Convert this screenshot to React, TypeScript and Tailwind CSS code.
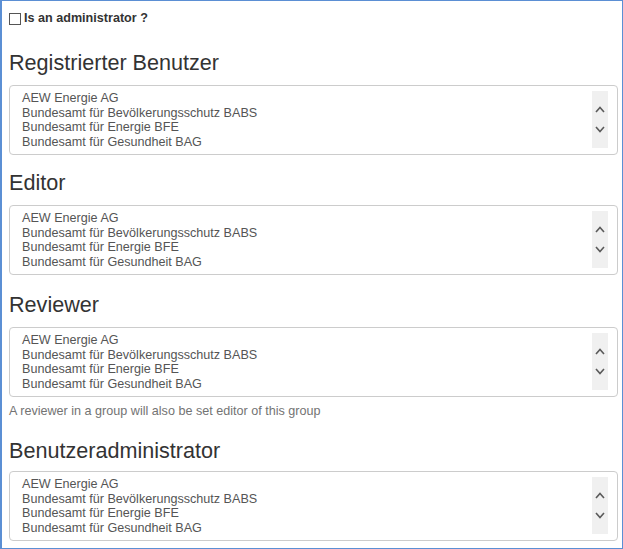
const ORGS = [
  'AEW Energie AG',
  'Bundesamt für Bevölkerungsschutz BABS',
  'Bundesamt für Energie BFE',
  'Bundesamt für Gesundheit BAG',
];

function Scrollbar() {
  return (
    <div className="w-[16px] bg-[#f0f0f0] flex flex-col items-center justify-center gap-[13px]">
      <svg width="10" height="7" viewBox="0 0 10 7">
        <path d="M1 6 L5 1.5 L9 6" fill="none" stroke="#5a5a5a" strokeWidth="1.6" />
      </svg>
      <svg width="10" height="7" viewBox="0 0 10 7">
        <path d="M1 1 L5 5.5 L9 1" fill="none" stroke="#5a5a5a" strokeWidth="1.6" />
      </svg>
    </div>
  );
}

function GroupSelect() {
  return (
    <div className="h-[70px] border border-[#cccccc] rounded-[4px] bg-white flex pl-[12px] pr-[9px] pt-[5px] pb-[6px]">
      <div className="flex-1 text-[12.6px] leading-[14.5px] text-[#555555]">
        {ORGS.map((o) => (
          <div key={o}>{o}</div>
        ))}
      </div>
      <Scrollbar />
    </div>
  );
}

function Heading({ children, className }: { children: string; className: string }) {
  return <h3 className={`text-[21.6px] leading-[24px] text-[#333333] ${className}`}>{children}</h3>;
}

export default function App() {
  return (
    <div
      className="w-[623px] h-[549px] border border-l-2 border-[#5b8fd4] bg-white pl-[7px] pr-[4px] overflow-hidden"
      style={{ fontFamily: '"Liberation Sans", Arial, sans-serif' }}
    >
      <label className="flex items-center h-[15px] mt-[10px] text-[12.6px] font-bold text-[#333333]">
        <span className="w-[12px] h-[12px] border border-[#555555] bg-white mr-[3px]" />
        Is an administrator ?
      </label>

      <Heading className="mt-[25px] mb-[10px]">Registrierter Benutzer</Heading>
      <GroupSelect />

      <Heading className="mt-[16px] mb-[10px]">Editor</Heading>
      <GroupSelect />

      <Heading className="mt-[18px] mb-[10px]">Reviewer</Heading>
      <GroupSelect />
      <p className="text-[12.6px] leading-[18px] text-[#737373] mt-[5px]">
        A reviewer in a group will also be set editor of this group
      </p>

      <Heading className="mt-[19px] mb-[8px]">Benutzeradministrator</Heading>
      <GroupSelect />
    </div>
  );
}
